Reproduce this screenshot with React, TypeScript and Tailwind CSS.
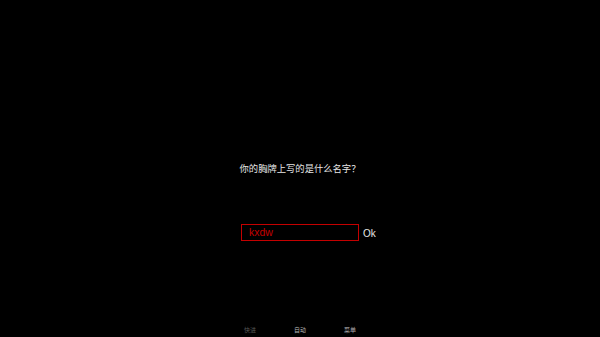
export default function App() {
  const font = { fontFamily: '"Noto Sans CJK SC", "Liberation Sans", sans-serif' }
  return (
    <div className="w-[600px] h-[337px] bg-black flex flex-col items-center overflow-hidden" style={font}>
      {/* question */}
      <p className="mt-[161px] text-[9.3px] leading-[14px] text-[#e6e6e6]">你的胸牌上写的是什么名字？</p>

      {/* name input */}
      <div className="mt-[49px] w-full grid grid-cols-[1fr_118px_1fr] items-center">
        <div />
        <div className="h-[17px] border-[1.5px] border-[#c40000] flex items-center pl-[7px]">
          <span className="text-[10.5px] leading-none text-[#c40000]" style={{ fontFamily: '"Liberation Sans", sans-serif' }}>kxdw</span>
        </div>
        <span className="pl-[4px] pt-[2px] text-[10px] leading-none text-[#e6e6e6]" style={{ fontFamily: '"Liberation Sans", sans-serif' }}>Ok</span>
      </div>

      {/* quick menu */}
      <div className="mt-auto mb-[2px] flex">
        {[
          { label: '快进', color: 'text-[#555555]' },
          { label: '自动', color: 'text-[#b0b0b0]' },
          { label: '菜单', color: 'text-[#b0b0b0]' },
        ].map(({ label, color }) => (
          <span key={label} className={`w-[50px] text-center text-[6px] leading-[10px] ${color}`}>{label}</span>
        ))}
      </div>
    </div>
  )
}
